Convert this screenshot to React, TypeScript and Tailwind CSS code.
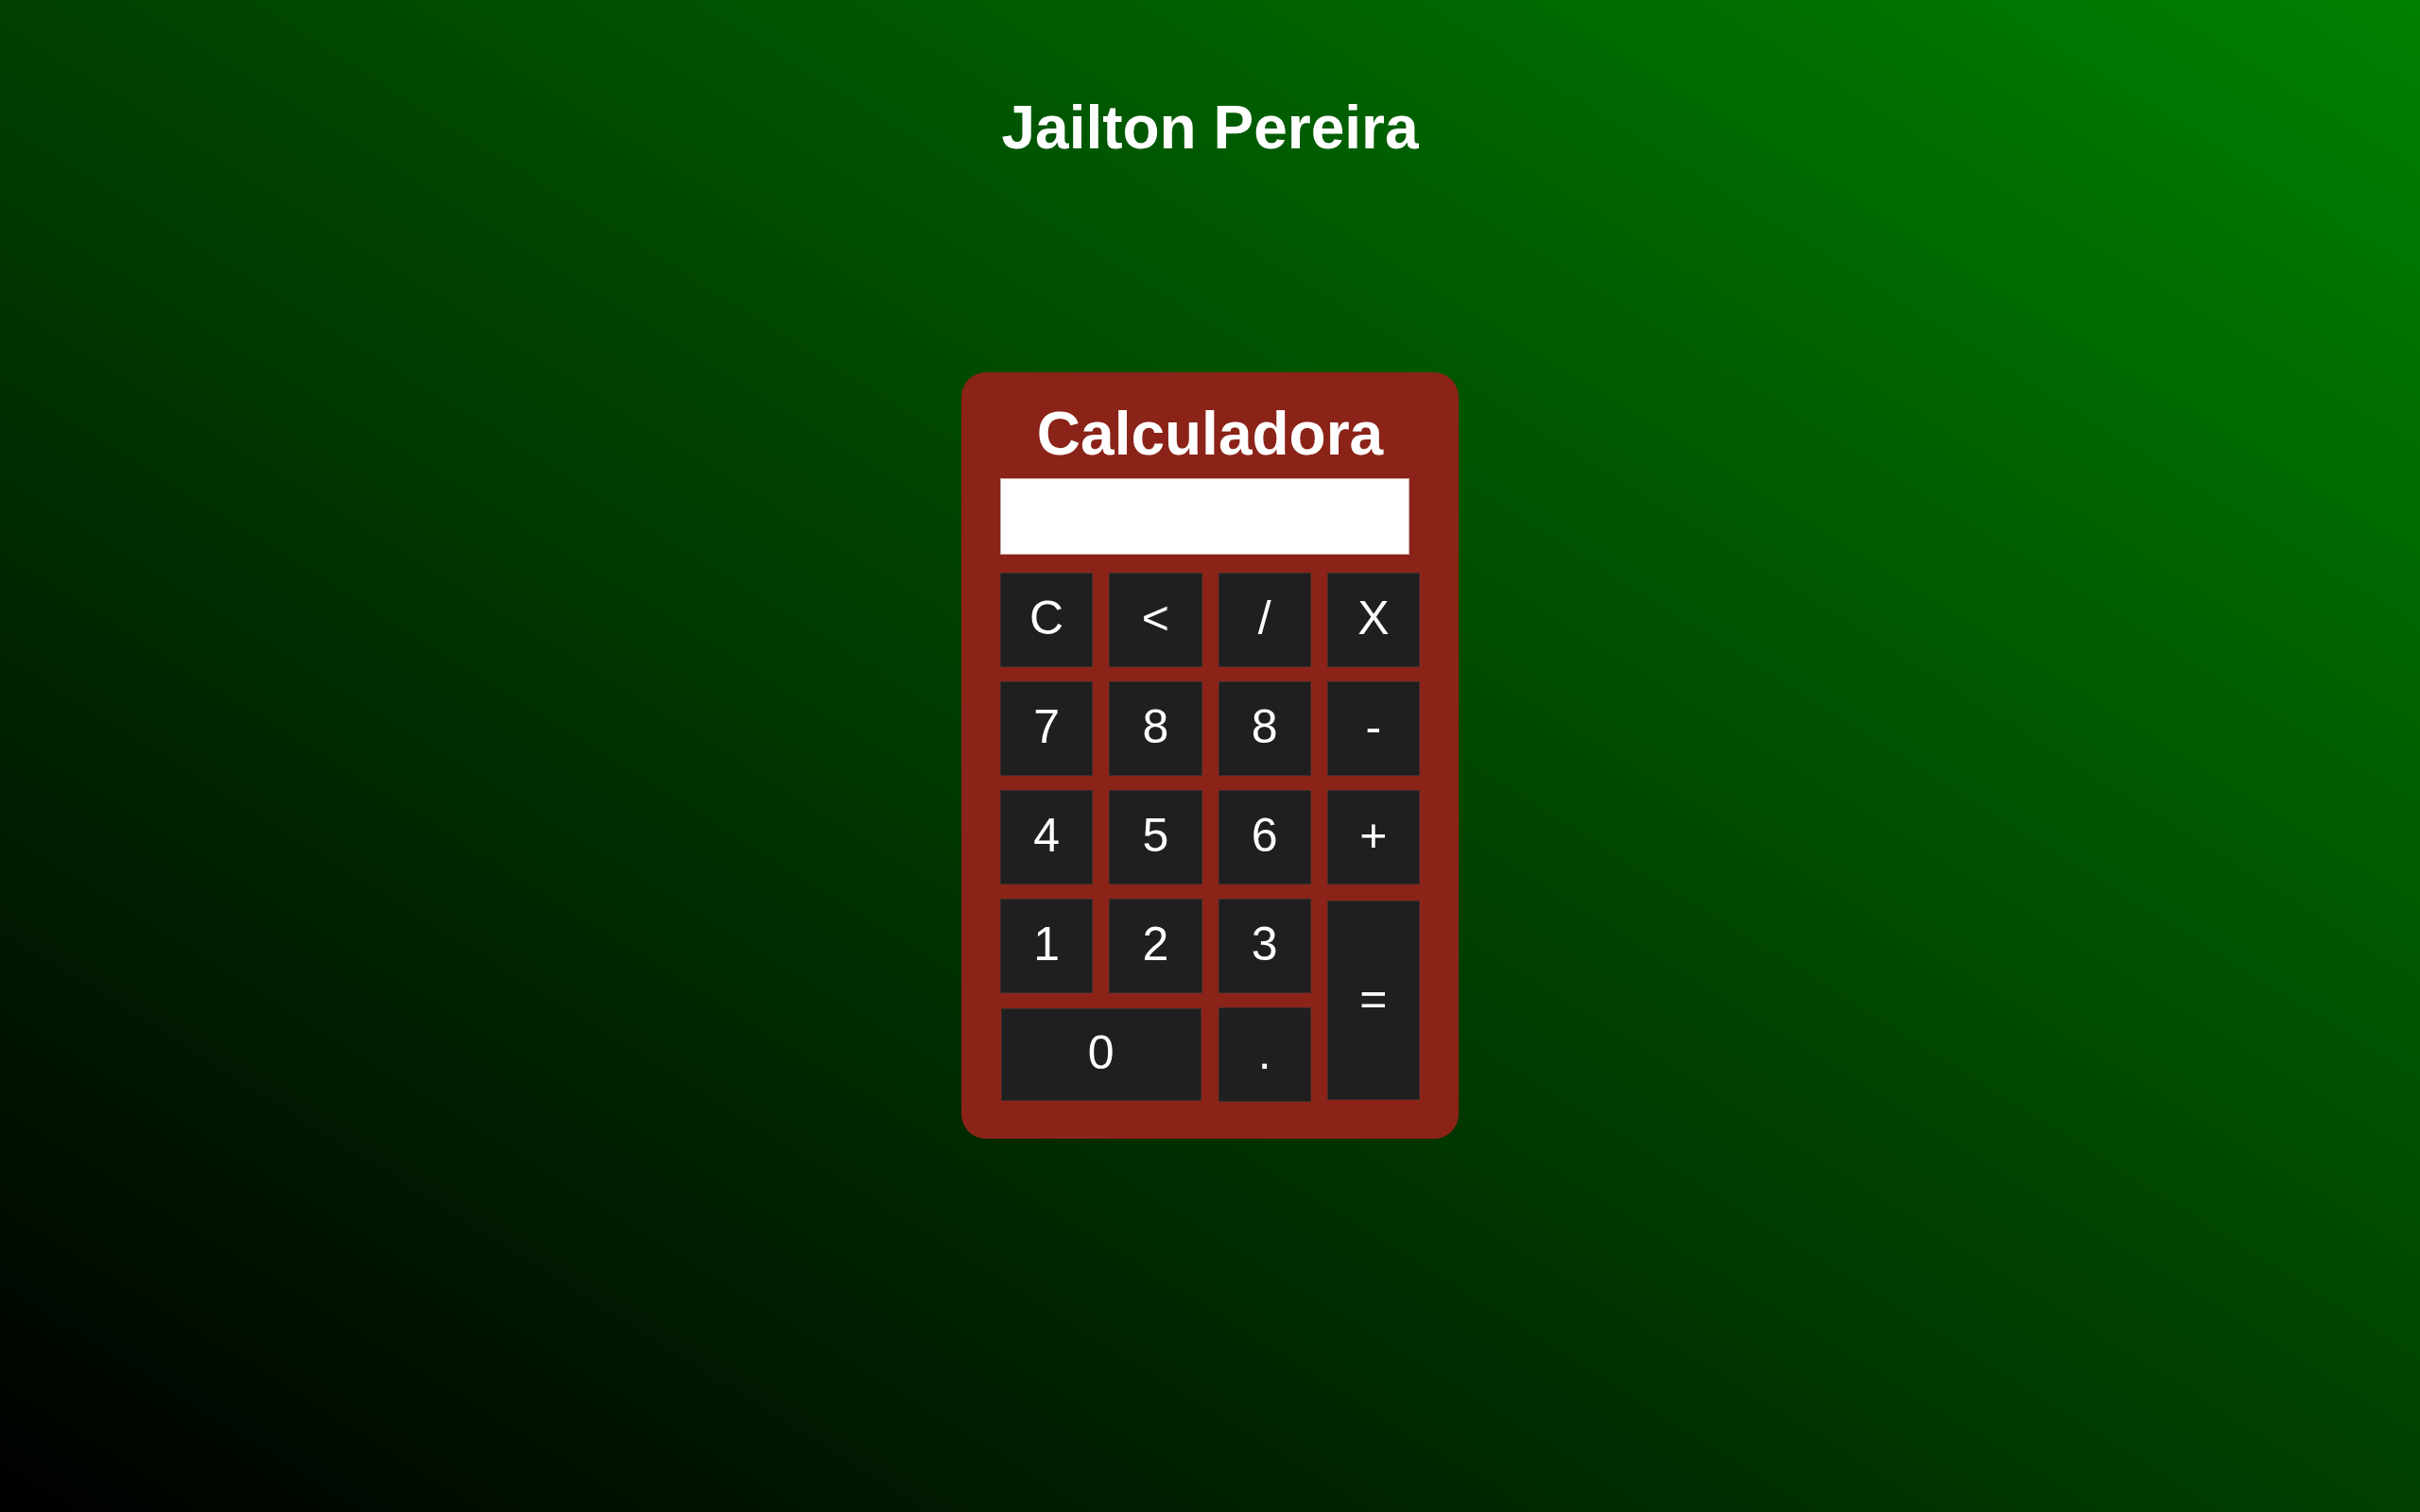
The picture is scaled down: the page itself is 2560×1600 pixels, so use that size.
import React, { useState } from 'react';

const keys: { label: string; span?: string }[] = [
  { label: 'C' },
  { label: '<' },
  { label: '/' },
  { label: 'X' },
  { label: '7' },
  { label: '8' },
  { label: '8' },
  { label: '-' },
  { label: '4' },
  { label: '5' },
  { label: '6' },
  { label: '+' },
  { label: '1' },
  { label: '2' },
  { label: '3' },
  { label: '=', span: 'row-span-2 my-[2px]' },
  { label: '0', span: 'col-span-2 m-[1px]' },
  { label: '.' },
];

export default function App() {
  const [display, setDisplay] = useState('');

  const press = (label: string) => {
    if (label === 'C') return setDisplay('');
    if (label === '<') return setDisplay(d => d.slice(0, -1));
    if (label === '=') {
      try {
        // eslint-disable-next-line no-new-func
        const result = Function(`return (${display.replace(/X/g, '*')})`)();
        setDisplay(String(result));
      } catch {
        setDisplay('Erro');
      }
      return;
    }
    setDisplay(d => d + label);
  };

  return (
    <div
      className="min-h-screen w-full bg-[linear-gradient(to_top_right,#000000,#008000)] text-white"
      style={{ fontFamily: '"Liberation Sans", Arial, sans-serif' }}
    >
      <div className="flex flex-col items-center pt-[99px]">
        <h1 className="text-[64px] font-bold leading-[73px]">Jailton Pereira</h1>

        <div className="mt-[222px] w-[526px] rounded-[26px] bg-[#8b2318] pt-[29px] pb-[39px] px-[41px]">
          <h2 className="text-center text-[64px] font-bold leading-[73px]">Calculadora</h2>
          <input
            readOnly
            value={display}
            className="mt-[10px] block h-[81px] w-[433px] border border-[#c9a8a4] bg-white px-3 text-right text-[40px] text-black outline-none"
          />
          <div className="mt-[19px] grid grid-cols-4 auto-rows-[100px] gap-x-[17px] gap-y-[15px]">
            {keys.map((k, i) => (
              <button
                key={i}
                onClick={() => press(k.label)}
                className={`flex items-center justify-center border border-[#3a2e2c] bg-[#1f1f1f] pb-[4px] text-[50px] leading-none text-white ${k.span ?? ''}`}
              >
                {k.label}
              </button>
            ))}
          </div>
        </div>
      </div>
    </div>
  );
}
